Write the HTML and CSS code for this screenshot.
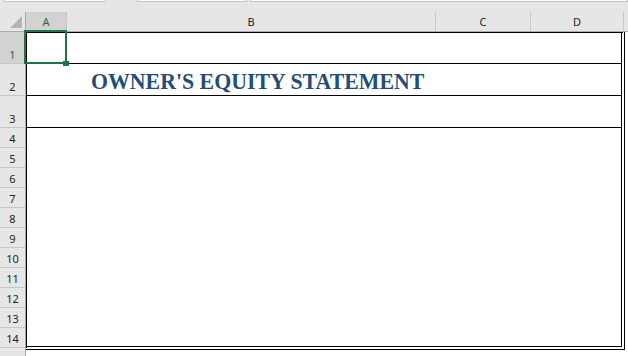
FILE: index.html
```html
<!DOCTYPE html>
<html>

	<head>
		<meta charset="UTF-8">
		<title>Owner's Equity Statement</title>
		<link rel="stylesheet" href="styles.css">
	</head>

	<body>
		<div class="topbar">
			<span class="box box-name"></span>
			<span class="box box-fx"></span>
			<span class="box box-formula"></span>
		</div>

		<div class="colheads">
			<div class="colhead corner">
				<svg width="12" height="12" viewBox="0 0 12 12"><polygon points="12,0 12,12 0,12" fill="#b4b4b4" /></svg>
			</div>
			<div class="colhead col-a sel">A</div>
			<div class="colhead col-b">B</div>
			<div class="colhead col-c">C</div>
			<div class="colhead col-d">D</div>
			<div class="colhead col-e"></div>
		</div>

		<div class="body">
			<div class="rowheads">
				<div class="rowhead tall sel">1</div>
				<div class="rowhead tall">2</div>
				<div class="rowhead tall">3</div>
				<div class="rowhead">4</div>
				<div class="rowhead">5</div>
				<div class="rowhead">6</div>
				<div class="rowhead">7</div>
				<div class="rowhead">8</div>
				<div class="rowhead">9</div>
				<div class="rowhead">10</div>
				<div class="rowhead">11</div>
				<div class="rowhead">12</div>
				<div class="rowhead">13</div>
				<div class="rowhead">14</div>
				<div class="rowhead last"></div>
			</div>

			<div class="sheet">
				<div class="line first"></div>
				<div class="line title-row">
					<span class="title">OWNER'S EQUITY STATEMENT</span>
				</div>
				<div class="line"></div>
				<div class="rest"></div>
			</div>
		</div>

		<!-- 选中的单元格 A1 -->
		<div class="selection">
			<span class="handle"></span>
		</div>
	</body>

</html>
```

FILE: styles.css
```css
* {
	margin: 0;
	padding: 0;
}

body {
	position: relative;
	width: 628px;
	height: 356px;
	overflow: hidden;
	background: #FFFFFF;
	font-family: "Noto Sans", "Liberation Sans", sans-serif;
	color: #222222;
}

.topbar {
	display: flex;
	height: 12px;
	background: #E6E6E6;
}

.topbar .box {
	box-sizing: border-box;
	height: 2px;
	background: #FFFFFF;
	border: 1px solid #C3C3C3;
	border-top: none;
}

.box-name {
	width: 102px;
	margin-left: 4px;
}

.box-fx {
	width: 110px;
	margin-left: 31px;
}

.box-formula {
	flex: 1;
	margin-left: 3px;
}

.colheads {
	display: flex;
	height: 20px;
	box-sizing: border-box;
	background: #E6E6E6;
	border-bottom: 1px solid #ABABAB;
}

.colhead {
	box-sizing: border-box;
	border-right: 1px solid #C6C6C6;
	font-size: 11px;
	line-height: 19px;
	text-align: center;
}

.colhead.corner {
	width: 26px;
	border-right-color: #ABABAB;
	display: flex;
	justify-content: flex-end;
	align-items: flex-end;
	padding: 0 3px 3px 0;
}

.col-a {
	width: 41px;
}

.col-b {
	width: 369px;
}

.col-c {
	width: 95px;
}

.col-d {
	width: 93px;
}

.col-e {
	flex: 1;
	border-right: none;
}

.sel {
	background: #D2D2D2;
	color: #1E6B3E;
}

.body {
	display: flex;
	height: 324px;
}

.rowheads {
	width: 26px;
	box-sizing: border-box;
	background: #E6E6E6;
	border-right: 1px solid #ABABAB;
}

.rowhead {
	box-sizing: border-box;
	height: 20px;
	border-bottom: 1px solid #C6C6C6;
	display: flex;
	justify-content: center;
	align-items: flex-end;
	font-size: 11px;
	line-height: 15px;
	padding-bottom: 1px;
}

.rowhead.tall {
	height: 32px;
}

.rowhead.last {
	border-bottom: none;
}

.sheet {
	width: 599px;
	height: 318px;
	box-sizing: border-box;
	border-left: 1px solid #000000;
	border-top: 1px solid #000000;
	border-right: 4px double #000000;
	border-bottom: 4px double #000000;
	display: flex;
	flex-direction: column;
}

.line {
	box-sizing: border-box;
	height: 32px;
	border-bottom: 1px solid #000000;
}

.line.first {
	height: 31px;
}

.title-row {
	display: flex;
	align-items: flex-end;
	padding-left: 64px;
	padding-bottom: 1px;
}

.title {
	display: inline-block;
	font-family: "Liberation Serif", serif;
	font-weight: bold;
	font-size: 24px;
	line-height: 26px;
	color: #1F4E79;
	transform: scaleX(0.91);
	transform-origin: left bottom;
	white-space: nowrap;
}

.rest {
	flex: 1;
}

.selection {
	position: absolute;
	left: 24px;
	top: 30px;
	width: 43px;
	height: 34px;
	box-sizing: border-box;
	border: 2px solid #217346;
}

.selection .handle {
	position: absolute;
	left: 37px;
	top: 29px;
	width: 6px;
	height: 5px;
	background: #217346;
}
```
